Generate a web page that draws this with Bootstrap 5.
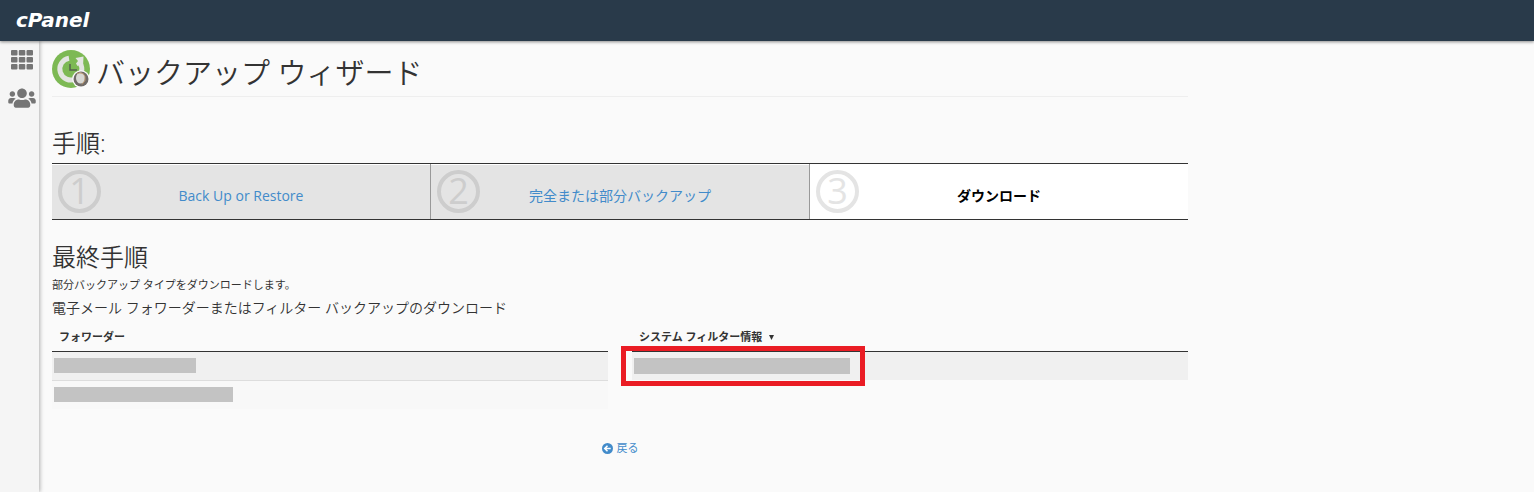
<!DOCTYPE html>
<html lang="ja">
<head>
<meta charset="utf-8">
<meta name="viewport" content="width=device-width, initial-scale=1">
<title>バックアップ ウィザード</title>
<link href="https://cdn.jsdelivr.net/npm/bootstrap@5.3.0/dist/css/bootstrap.min.css" rel="stylesheet">
<style>
  body { font-family: "Open Sans", "Noto Sans CJK JP", sans-serif; font-size: 11px; line-height: 16px; color: #333; background: #fafafa; }
  a { color: #428bca; text-decoration: none; }
  .topbar { height: 41px; background: #293a4a; box-shadow: 0 1px 3px rgba(0,0,0,.45); z-index: 2; }
  .logo { font: italic bold 20px/40px "DejaVu Sans", sans-serif; color: #fff; }
  .sidebar { width: 39px; background: #f5f5f5; box-shadow: 1px 0 4px rgba(0,0,0,.3); }
  .sidebar a { color: #757575; }
  .main-area { max-width: 1136px; margin: 0 13px; }
  h1, h2 { font-weight: 350; color: #333; }
  h1 { font-size: 29px; line-height: 44px; }
  h2 { font-size: 24px; line-height: 32px; }
  h3 { font-size: 14px; line-height: 22px; font-weight: 350; color: #333; }
  .title-row { height: 48px; border-bottom: 1px solid #eee; }
  .first-heading { margin-top: 30px; }
  .steps { border-top: 1px solid #333; border-bottom: 1px solid #333; font-size: 14px; margin-bottom: 21px; }
  .step { height: 55px; padding-top: 8px; background: #e4e4e4; box-shadow: inset 0 1px #fff; }
  .step + .step { border-left: 1px solid #999; }
  .step.current { background: #fff; color: #000; }
  .num { left: 6px; top: 6px; width: 43px; height: 43px; border: 4px solid #cdcdcd; border-radius: 50%; font: 36px/34px "Open Sans", sans-serif; color: #cdcdcd; }
  .current .num { color: #e4e4e4; border-color: #e4e4e4; }
  .lists { gap: 24px; }
  .lists th { height: 28px; padding: 0 7px; border-bottom: 1px solid #333; font-weight: 700; }
  .lists td { height: 29px; padding: 0 2px; background: #f0f0f0; }
  .lists tr + tr td { border-top: 1px solid #ddd; background: #f8f8f8; }
  .masked { display: block; height: 15px; background: #c3c3c3; }
  .masked-a { width: 142px; } .masked-b { width: 179px; } .masked-c { width: 216px; height: 16px; }
  .highlight { left: -11px; top: -6px; width: 244px; height: 40px; border: 5px solid #ea1c24; pointer-events: none; }
  .back { margin-top: 31px; }
</style>
</head>
<body class="d-flex flex-column min-vh-100">
<header class="topbar position-relative px-3"><a class="logo" href="#">cPanel</a></header>
<div class="d-flex flex-grow-1">
  <nav class="sidebar flex-shrink-0 d-flex flex-column align-items-center pt-2 ps-1" aria-label="メニュー">
    <a href="#" aria-label="ホーム" class="d-block mb-3"><svg class="d-block" width="24" height="22" viewBox="0 0 24 22" fill="currentColor"><g id="r"><rect x="1" y="1" width="6.500" height="5.500" rx="1"/><rect x="8.800" y="1" width="6.500" height="5.500" rx="1"/><rect x="16.500" y="1" width="6.500" height="5.500" rx="1"/></g><use href="#r" y="7"/><use href="#r" y="14"/></svg></a>
    <a href="#" aria-label="ユーザー"><svg class="d-block" width="28" height="22" viewBox="0 0 640 512" fill="currentColor"><path d="M96 224c35 0 64-29 64-64s-29-64-64-64-64 29-64 64 29 64 64 64zm448 0c35 0 64-29 64-64s-29-64-64-64-64 29-64 64 29 64 64 64zm32 32h-64c-18 0-34 7-45 19 40 22 69 62 75 109h66c18 0 32-14 32-32v-32c0-35-29-64-64-64zm-256 0c62 0 112-50 112-112S382 32 320 32 208 82 208 144s50 112 112 112zm77 32h-8c-21 10-44 16-69 16s-48-6-69-16h-8c-64 0-115 52-115 115v29c0 27 21 48 48 48h288c27 0 48-21 48-48v-29c0-63-51-115-115-115zm-223-13c-12-12-28-19-46-19H64c-35 0-64 29-64 64v32c0 18 14 32 32 32h66c6-47 35-87 76-109z"/></svg></a>
  </nav>
  <main class="main-area flex-grow-1 pb-4">
    <div class="title-row d-flex align-items-center mt-2 gap-1">
      <svg class="flex-shrink-0 mb-2" width="40" height="40" viewBox="0 0 40 40" aria-hidden="true"><circle cx="19" cy="20" r="19" fill="#7db954"/><path d="M17 9.200A11 11 0 1 0 28 14" fill="none" stroke="#e3e5e1" stroke-width="5"/><path d="M23.500 9 31.500 7.500 31 18 28 15.500 25.500 17 24 14.500 26 12z" fill="#e3e5e1"/><path d="M18 15v6h7" fill="none" stroke="#56614d" stroke-width="1.500"/><circle cx="29" cy="30" r="8.800" fill="#fafafa"/><circle cx="29" cy="30" r="7.500" fill="#706b68"/><ellipse cx="28.500" cy="29" rx="4.500" ry="5.500" fill="#d8d8d4"/><path d="M25 24.500q6-2 8 3v4l-3 4" fill="none" stroke="#b9956d"/></svg>
      <h1 class="m-0">バックアップ ウィザード</h1>
    </div>
    <h2 class="first-heading mb-1">手順:</h2>
    <div class="steps row g-0">
      <div class="step col position-relative d-flex align-items-center justify-content-center"><span class="num position-absolute text-center">1</span><a href="#">Back Up or Restore</a></div>
      <div class="step col position-relative d-flex align-items-center justify-content-center"><span class="num position-absolute text-center">2</span><a href="#">完全または部分バックアップ</a></div>
      <div class="step current col position-relative d-flex align-items-center justify-content-center"><span class="num position-absolute text-center">3</span><strong>ダウンロード</strong></div>
    </div>
    <h2 class="mb-1">最終手順</h2>
    <p class="mb-1">部分バックアップ タイプをダウンロードします。</p>
    <h3 class="mb-1">電子メール フォワーダーまたはフィルター バックアップのダウンロード</h3>
    <div class="lists d-flex align-items-start">
      <table class="w-100"><thead><tr><th>フォワーダー</th></tr></thead>
        <tbody><tr><td><span class="masked masked-a"></span></td></tr><tr><td><span class="masked masked-b"></span></td></tr></tbody></table>
      <table class="w-100"><thead><tr><th>システム フィルター情報 <svg class="ms-1" width="6" height="7" viewBox="0 0 6 7" aria-hidden="true"><path d="M0 1h5L2.500 6z" fill="#333"/></svg></th></tr></thead>
        <tbody><tr><td class="position-relative"><span class="masked masked-c"></span><span class="highlight position-absolute"></span></td></tr></tbody></table>
    </div>
    <div class="back text-center"><a href="#" class="d-inline-flex align-items-center gap-1"><svg width="11" height="11" viewBox="0 0 12 12" aria-hidden="true"><circle cx="6" cy="6" r="6" fill="#428bca"/><path d="M9.500 6H3M6 3 3 6l3 3" fill="none" stroke="#fff" stroke-width="1.700"/></svg>戻る</a></div>
  </main>
</div>
<script src="https://cdn.jsdelivr.net/npm/bootstrap@5.3.0/dist/js/bootstrap.bundle.min.js"></script>
</body>
</html>
